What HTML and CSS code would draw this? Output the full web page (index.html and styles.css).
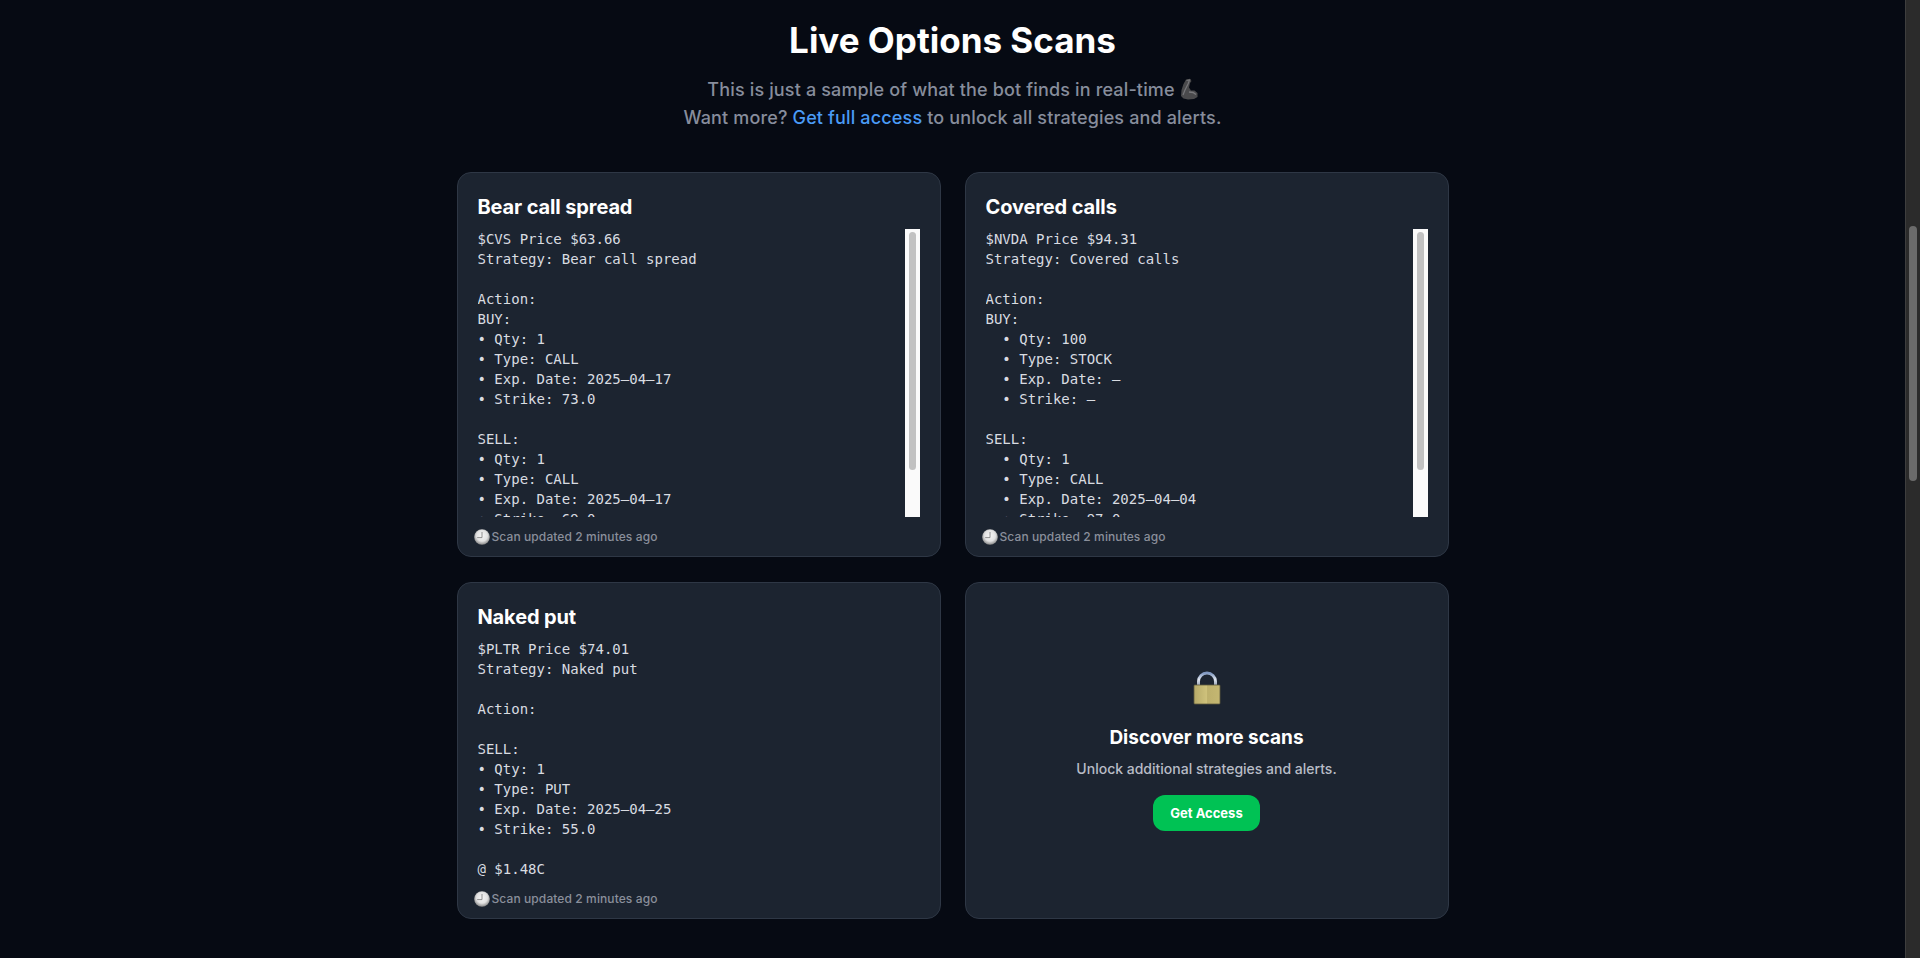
FILE: index.html
```html
<!DOCTYPE html>
<html lang="en">
<head>
    <meta charset="UTF-8">
    <meta name="viewport" content="width=device-width, initial-scale=1.0">
    <title>Live Options Scans</title>
    <link rel="stylesheet" href="styles.css">
</head>
<body>
    <svg class="defs" width="0" height="0" aria-hidden="true">
        <defs>
            <radialGradient id="clockFace" cx="50%" cy="42%" r="58%">
                <stop offset="0" stop-color="#f6f6f6"/>
                <stop offset="0.6" stop-color="#e2e2e2"/>
                <stop offset="1" stop-color="#858585"/>
            </radialGradient>
            <linearGradient id="lockBody" x1="0" x2="1" y1="0" y2="0">
                <stop offset="0" stop-color="#b5a968"/>
                <stop offset="0.5" stop-color="#cfc27c"/>
                <stop offset="0.52" stop-color="#bdb06c"/>
                <stop offset="1" stop-color="#c4b772"/>
            </linearGradient>
            <linearGradient id="lockShackle" x1="0" x2="0" y1="0" y2="1">
                <stop offset="0" stop-color="#7f97c0"/>
                <stop offset="0.5" stop-color="#dfe5ee"/>
                <stop offset="1" stop-color="#8d99ad"/>
            </linearGradient>
            <symbol id="clock" viewBox="0 0 16 16">
                <circle cx="8" cy="8" r="7.8" fill="url(#clockFace)"/>
                <path d="M8 3V8.6H3.2" fill="none" stroke="#777" stroke-width="0.8"/>
            </symbol>
        </defs>
    </svg>

    <div class="page">
        <main class="content">
            <!-- Header -->
            <header class="intro">
                <h1>Live Options Scans</h1>
                <p>This is just a sample of what the bot finds in real-time
                    <svg class="muscle" viewBox="0 0 18 22" aria-hidden="true">
                        <path d="M6 1.5 10 0.8 11.5 3 10 5 9 9.5 11 12.5 14.5 12.5 17.5 15 17.5 19 14 21 8 21.5 3.5 20.5 1 18 1.5 12 3.5 6Z" fill="#4a4a4c"/>
                        <path d="M6.5 2.5 9.5 2 8 6 5 12 3 17" fill="none" stroke="#77777a" stroke-width="1.2"/>
                        <path d="M9 14 13 14.5 16 16.5" fill="none" stroke="#79797c" stroke-width="1.4"/>
                    </svg>
                </p>
                <p>Want more? <a href="#">Get full access</a> to unlock all strategies and alerts.</p>
            </header>

            <!-- Scan cards -->
            <section class="scan-grid">
                <article class="card">
                    <h2>Bear call spread</h2>
                    <div class="scan-box">
                        <pre class="scan-text">$CVS Price $63.66
Strategy: Bear call spread

Action:
BUY:
• Qty: 1
• Type: CALL
• Exp. Date: 2025–04–17
• Strike: 73.0

SELL:
• Qty: 1
• Type: CALL
• Exp. Date: 2025–04–17
• Strike: 69.0</pre>
                        <div class="box-scrollbar"><span class="box-thumb"></span></div>
                    </div>
                    <p class="updated"><svg class="clock"><use href="#clock"/></svg>Scan updated 2 minutes ago</p>
                </article>

                <article class="card">
                    <h2>Covered calls</h2>
                    <div class="scan-box">
                        <pre class="scan-text">$NVDA Price $94.31
Strategy: Covered calls

Action:
BUY:
  • Qty: 100
  • Type: STOCK
  • Exp. Date: –
  • Strike: –

SELL:
  • Qty: 1
  • Type: CALL
  • Exp. Date: 2025–04–04
  • Strike: 97.0</pre>
                        <div class="box-scrollbar"><span class="box-thumb"></span></div>
                    </div>
                    <p class="updated"><svg class="clock"><use href="#clock"/></svg>Scan updated 2 minutes ago</p>
                </article>

                <article class="card">
                    <h2>Naked put</h2>
                    <pre class="scan-text">$PLTR Price $74.01
Strategy: Naked put

Action:

SELL:
• Qty: 1
• Type: PUT
• Exp. Date: 2025–04–25
• Strike: 55.0

@ $1.48C</pre>
                    <p class="updated"><svg class="clock"><use href="#clock"/></svg>Scan updated 2 minutes ago</p>
                </article>

                <article class="card card-cta">
                    <svg class="lock" viewBox="0 0 28 34" aria-hidden="true">
                        <path d="M5.5 15V10.5a8.5 8.5 0 0 1 17 0V15" fill="none" stroke="url(#lockShackle)" stroke-width="3"/>
                        <rect x="1" y="14" width="26" height="19" rx="0.8" fill="url(#lockBody)" stroke="#5f5a3e" stroke-width="0.8"/>
                    </svg>
                    <h3>Discover more scans</h3>
                    <p>Unlock additional strategies and alerts.</p>
                    <a class="cta-button" href="#">Get Access</a>
                </article>
            </section>
        </main>

        <!-- Page scrollbar, page is shown scrolled a little -->
        <aside class="page-scrollbar"><span class="page-thumb"></span></aside>
    </div>
</body>
</html>
```

FILE: styles.css
```css
/* General */
* {
    box-sizing: border-box;
}
html, body {
    height: 100%;
}
body {
    margin: 0;
    background: #060a13;
    color: #fff;
    font-family: Inter, "Noto Sans", sans-serif;
    overflow: hidden;
}
.defs {
    position: absolute;
}
.page {
    display: flex;
    height: 100%;
}
.content {
    flex: 1;
    padding-top: 20px;
}

/* Header */
.intro {
    text-align: center;
    margin-bottom: 40px;
}
.intro h1 {
    margin: 0 0 16px;
    font-size: 35px;
    line-height: 40px;
    font-weight: 700;
}
.intro p {
    margin: 0;
    font-size: 18px;
    line-height: 28px;
    font-weight: 500;
    letter-spacing: 0.15px;
    color: #878d9c;
}
.intro a {
    color: #4a9bf6;
    text-decoration: none;
}
.muscle {
    width: 18px;
    height: 22px;
    vertical-align: -4px;
}

/* Cards */
.scan-grid {
    width: 992px;
    margin: 0 auto;
    display: grid;
    grid-template-columns: 484px 484px;
    column-gap: 24px;
    row-gap: 25px;
}
.card {
    background: #1c2430;
    border: 1px solid #2e3745;
    border-radius: 14px;
    padding: 20px 20px 11px;
}
.card h2 {
    margin: 0 0 8px;
    font-size: 20px;
    line-height: 28px;
    font-weight: 700;
    letter-spacing: -0.12px;
}
.scan-box {
    display: flex;
    height: 288px;
}
.scan-box .scan-text {
    flex: 1;
    overflow: hidden;
}
.scan-text {
    margin: 0;
    font-family: "DejaVu Sans Mono", "Liberation Mono", monospace;
    font-size: 14px;
    line-height: 20px;
    color: #d9dce1;
}
.box-scrollbar {
    width: 15px;
    background: #fafafa;
    padding: 3px 4px 0 4px;
}
.box-thumb {
    display: block;
    height: 238px;
    background: #c1c1c1;
    border-radius: 4px;
}
.updated {
    display: flex;
    align-items: center;
    margin: 12px 0 0 -4px;
    font-size: 12px;
    line-height: 16px;
    font-weight: 500;
    letter-spacing: 0.1px;
    color: #8a8f9b;
}
.clock {
    width: 16px;
    height: 16px;
    margin-right: 2px;
}

/* Locked card */
.card-cta {
    display: flex;
    flex-direction: column;
    align-items: center;
    justify-content: center;
    padding-bottom: 19px;
}
.lock {
    width: 28px;
    height: 34px;
    margin-bottom: 19px;
}
.card-cta h3 {
    margin: 0 0 7px;
    font-size: 19px;
    line-height: 28px;
    font-weight: 700;
}
.card-cta p {
    margin: 0 0 16px;
    font-size: 14px;
    line-height: 20px;
    font-weight: 500;
    color: #b8bcc6;
}
.cta-button {
    width: 107px;
    height: 36px;
    line-height: 36px;
    text-align: center;
    background: #00c254;
    border-radius: 12px;
    color: #fff;
    font-size: 13px;
    font-weight: 700;
    text-decoration: none;
}

/* Page scrollbar */
.page-scrollbar {
    width: 15px;
    background: #2b2b2b;
    border-left: 1px solid #3e3e3e;
    padding: 226px 3px 0 3px;
}
.page-thumb {
    display: block;
    height: 255px;
    background: #6b6b6b;
    border-radius: 4px;
}
```
